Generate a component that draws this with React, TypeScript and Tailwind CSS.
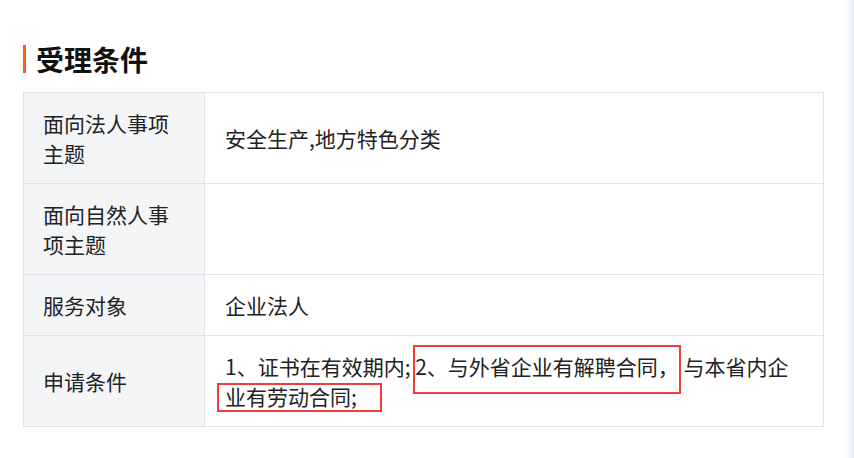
import React from "react";

const rows: { label: string; value: React.ReactNode }[] = [
  { label: "面向法人事项主题", value: "安全生产,地方特色分类" },
  { label: "面向自然人事项主题", value: "" },
  { label: "服务对象", value: "企业法人" },
  {
    label: "申请条件",
    value: "1、证书在有效期内; 2、与外省企业有解聘合同， 与本省内企业有劳动合同;",
  },
];

export default function App() {
  return (
    <div
      className="flex w-[854px] h-[458px] bg-white text-[#222]"
      style={{ fontFamily: '"Noto Sans CJK SC", "Liberation Sans", sans-serif' }}
    >
      <div className="flex-1 pl-[23px] pt-[42px]">
        <div className="flex items-center h-[34px]">
          <div className="w-[3px] h-[28px] bg-[#ff5a1e]" />
          <h2 className="ml-[10px] text-[28px] leading-[34px] font-bold text-[#111]">受理条件</h2>
        </div>
        <div className="relative mt-[16px] w-[801px] border border-[#dfe2e8]">
          {rows.map((r, i) => (
            <div
              key={i}
              className={`flex ${i < rows.length - 1 ? "border-b border-[#dfe2e8]" : ""}`}
            >
              <div className="w-[181px] shrink-0 bg-[#f4f5f7] border-r border-[#dfe2e8] flex items-center pl-[19px] pr-[28px] py-[15px] text-[21px] leading-[30px]">
                {r.label}
              </div>
              <div className="flex-1 flex items-center pl-[20px] pr-[24px] py-[15px] text-[21px] leading-[30px]">
                {r.value}
              </div>
            </div>
          ))}
          <div className="absolute left-[389px] top-[252px] w-[268px] h-[49px] border-[2px] border-[#f03c3c]" />
          <div className="absolute left-[193px] top-[290px] w-[165px] h-[29px] border-[2px] border-[#f03c3c]" />
        </div>
      </div>
      <div className="w-[11px] bg-gradient-to-r from-white to-[#eef0f6] border-r border-[#e3e6ee]" />
    </div>
  );
}
